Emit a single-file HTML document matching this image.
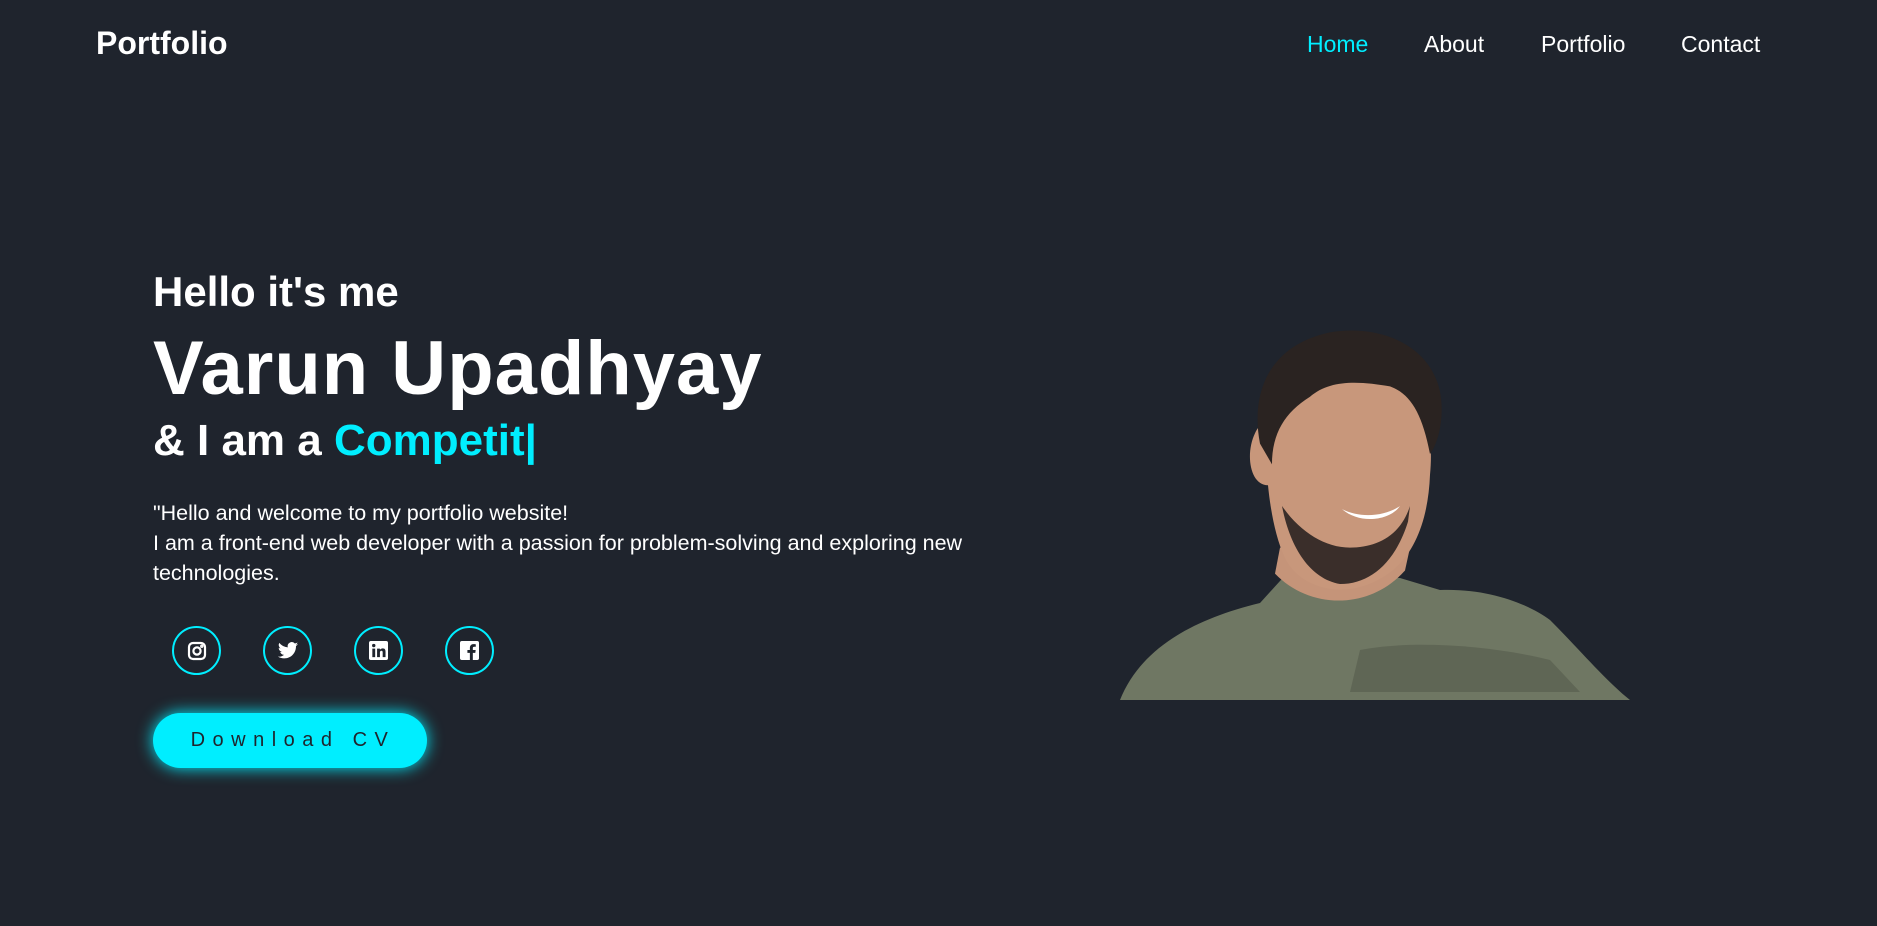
<!DOCTYPE html>
<html><head><meta charset="utf-8"><style>
*{margin:0;padding:0;box-sizing:border-box}
body{width:1877px;height:926px;background:#1f242d;font-family:"Liberation Sans",sans-serif;color:#fff;position:relative;overflow:hidden}
.logo{position:absolute;left:96px;top:25px;font-size:32px;font-weight:bold}
.nav a{position:absolute;top:31px;font-size:23px;color:#fff;text-decoration:none}
h3{position:absolute;left:153px;font-weight:bold;white-space:nowrap}
h1{position:absolute;left:153px;top:325px;font-size:76px;font-weight:bold;letter-spacing:1px}
.c{color:#0ef}
p{position:absolute;left:153px;top:498px;width:880px;font-size:21.5px;line-height:30px}
.ic{position:absolute;top:626px;width:49px;height:49px;border:2px solid #0ef;border-radius:50%;display:flex;align-items:center;justify-content:center}
.btn{position:absolute;left:153px;top:713px;width:274px;height:55px;border-radius:28px;background:#0ef;box-shadow:0 0 16px #0ef;color:#1f242d;font-size:20px;letter-spacing:7.5px;display:flex;align-items:center;justify-content:center;padding-left:6px}
</style></head><body>
<div class="logo">Portfolio</div>
<div class="nav"><a style="left:1307px;color:#0ef">Home</a><a style="left:1424px">About</a><a style="left:1541px">Portfolio</a><a style="left:1681px">Contact</a></div>
<h3 style="top:268px;font-size:42px">Hello it's me</h3>
<h1>Varun Upadhyay</h1>
<h3 style="top:416px;font-size:44px">&amp; I am a <span class="c">Competit|</span></h3>
<p>"Hello and welcome to my portfolio website!<br>I am a front-end web developer with a passion for problem-solving and exploring new technologies.</p>
<div class="ic" style="left:172px"><svg width="20" height="20" viewBox="0 0 20 20" fill="none" stroke="#fff" stroke-width="2.2"><rect x="2" y="2" width="16" height="16" rx="4"/><circle cx="10" cy="10" r="3.6"/><circle cx="14.8" cy="5.2" r=".6" fill="#fff"/></svg></div>
<div class="ic" style="left:263px"><svg width="22" height="20" viewBox="0 0 24 20"><path fill="#fff" d="M23 2.5c-.8.4-1.7.6-2.6.7.9-.6 1.6-1.4 2-2.5-.9.5-1.900.9-2.9 1.1A4.5 4.5 0 0 0 11.8 6 12.8 12.8 0 0 1 2.5 1.2a4.5 4.5 0 0 0 1.4 6c-.7 0-1.4-.2-2-.6 0 2.2 1.6 4 3.6 4.4-.7.2-1.4.2-2 .1.6 1.8 2.2 3.1 4.2 3.1A9 9 0 0 1 1 16.1 12.8 12.8 0 0 0 7.9 18c8.3 0 12.8-6.9 12.8-12.800v-.6c.9-.6 1.7-1.4 2.3-2.1z"/></svg></div>
<div class="ic" style="left:354px"><svg width="19" height="19" viewBox="0 0 20 20"><rect width="20" height="20" rx="2" fill="#fff"/><rect x="3.5" y="8" width="3" height="9" fill="#1f242d"/><circle cx="5" cy="4.8" r="1.8" fill="#1f242d"/><path fill="#1f242d" d="M8.5 8h3v1.4c.5-1 1.6-1.6 3-1.6 2.3 0 2.900 1.5 2.9 3.6V17h-3v-5c0-1-.3-1.800-1.3-1.800s-1.6.7-1.6 1.800v5h-3z"/></svg></div>
<div class="ic" style="left:445px"><svg width="19" height="19" viewBox="0 0 20 20"><rect width="20" height="20" rx="2" fill="#fff"/><path fill="#1f242d" d="M13.5 20v-7.5h2.6l.4-3h-3V7.6c0-.9.3-1.5 1.5-1.5h1.6V3.4c-.3 0-1.2-.1-2.3-.1-2.3 0-3.9 1.4-3.9 4v2.2H7.8v3h2.6V20z"/></svg></div>
<div class="btn">Download CV</div>
<svg style="position:absolute;left:1110px;top:320px" width="540" height="390" viewBox="0 0 540 390">
<path fill="#6f7763" d="M10 380 C30 330 80 300 150 283 L180 250 L290 258 L330 270 C380 268 420 285 440 300 C470 330 495 360 520 380 Z"/>
<path fill="#5f6655" d="M240 372 L250 330 C300 320 380 325 440 340 L470 372 Z"/>
<g transform="translate(0,-22) scale(1,1.04)">
<path fill="#c59479" d="M165 265 C200 300 260 300 295 262 L300 240 L170 240 Z"/>
<path fill="#c8977b" d="M155 115 C150 80 220 50 270 70 C310 85 325 120 320 170 C318 220 300 255 270 270 C235 290 190 280 175 250 C165 230 160 200 158 180 C140 180 135 150 145 130 C150 120 155 120 155 115 Z"/>
<path fill="#3a2e2a" d="M172 200 C180 240 200 270 230 275 C260 275 285 255 298 215 L300 200 C290 230 265 240 240 240 C215 240 190 225 172 200 Z"/>
<path fill="#2a2321" d="M150 140 C140 90 160 45 220 33 C270 25 320 45 330 90 C335 115 328 140 320 150 C312 110 300 92 280 85 C250 80 220 78 200 95 C175 110 162 130 162 160 Z"/>
<path fill="#fff" d="M232 203 C250 212 275 210 290 200 C280 214 250 218 232 203 Z"/>
</g>
</svg>
</body></html>
